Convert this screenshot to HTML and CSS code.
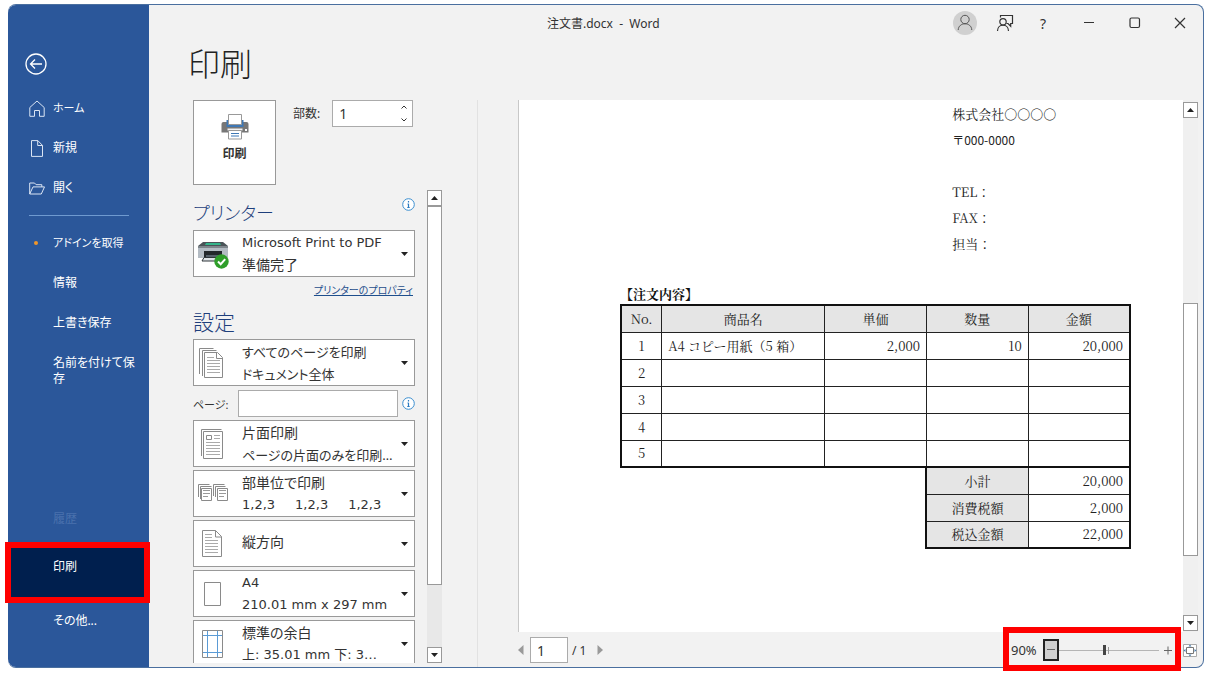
FILE: index.html
```html
<!DOCTYPE html>
<html lang="ja">
<head>
<meta charset="utf-8">
<title>注文書.docx - Word</title>
<link rel="stylesheet" href="styles.css">
</head>
<body>
<svg class="defs" aria-hidden="true">
  <symbol id="info" viewBox="0 0 13 13"><circle cx="6.5" cy="6.5" r="5.8" fill="#fff" stroke="#3c8fd0"/><path d="M6.500 3v1.500M6.500 5.700v4M5.500 6h1M5.300 9.500h2.400" stroke="#2a7ac0" stroke-width="1.200" fill="none"/></symbol>
  <symbol id="down" viewBox="0 0 7 4"><path d="M0 0h7L3.5 4z" fill="#222"/></symbol>
  <symbol id="up" viewBox="0 0 7 4"><path d="M0 4h7L3.5 0z" fill="#222"/></symbol>
</svg>
<div class="window">
  <nav class="sidebar">
    <button class="back" aria-label="戻る">
      <svg width="22" height="22" viewBox="0 0 22 22" fill="none" stroke="#fff" stroke-width="1.300"><circle cx="11" cy="11" r="10"/><path d="M17 11H5.5M10 6.5L5.5 11l4.500 4.500"/></svg>
    </button>
    <button class="nav-item"><svg width="16" height="17" viewBox="0 0 16 17" fill="none" stroke="#dbe5f4"><path d="M.8 7.500L8 1l7.200 6.500v8.800h-4.700v-5.800h-5v5.800H.8z"/></svg><span class="kana">ホーム</span></button>
    <button class="nav-item"><svg width="16" height="17" viewBox="0 0 16 17" fill="none" stroke="#dbe5f4"><path d="M2.500.6h6.300l4.700 4.800v11h-11zM8.700.6v4.900h4.800"/></svg><span>新規</span></button>
    <button class="nav-item"><svg width="16" height="17" viewBox="0 0 16 17" fill="none" stroke="#dbe5f4"><path d="M.7 14V3h4.800l1.600 1.700h5.700v2.200M.7 14L4 6.900h11.500L12.300 14z"/></svg><span>開く</span></button>
    <hr class="nav-line">
    <button class="nav-item"><i class="slot"><i class="dot"></i></i><span class="kana">アドインを取得</span></button>
    <button class="nav-item"><i class="slot"></i><span>情報</span></button>
    <button class="nav-item"><i class="slot"></i><span>上書き保存</span></button>
    <button class="nav-item tall"><i class="slot"></i><span>名前を付けて保存</span></button>
    <button class="nav-item history" disabled><i class="slot"></i><span>履歴</span></button>
    <button class="nav-item current" aria-current="page"><i class="slot"></i><span>印刷</span></button>
    <button class="nav-item"><i class="slot"></i><span>その他...</span></button>
  </nav>

  <main class="main">
    <header class="titlebar">
      <div class="doc-title">注文書.docx&nbsp;&nbsp;-&nbsp;&nbsp;Word</div>
      <div class="window-tools">
        <button class="avatar" aria-label="アカウント"><svg width="24" height="24" viewBox="0 0 24 24"><circle cx="12" cy="12" r="12" fill="#d0d0d0"/><g fill="none" stroke="#555"><circle cx="12" cy="8.500" r="4.200"/><path d="M5.200 19c.3-8.300 13.300-8.300 13.600 0"/></g></svg></button>
        <button aria-label="フィードバック"><svg width="18" height="18" viewBox="0 0 18 18" fill="none" stroke="#333" stroke-width="1.200"><path d="M4.500 3.500V1.500h12v8h-1.800v2.700l-2.700-2.700h-1.500"/><circle cx="7" cy="7.800" r="3.200"/><path d="M1.500 17c0-7.800 11-7.800 11 0"/></svg></button>
        <button class="help" aria-label="ヘルプ">?</button>
        <button aria-label="最小化"><svg width="12" height="12" viewBox="0 0 12 12"><path d="M1 5.500h10" stroke="#333"/></svg></button>
        <button aria-label="最大化"><svg width="12" height="12" viewBox="0 0 12 12"><rect x="1" y="1" width="9.500" height="9.500" rx="1.500" fill="none" stroke="#333" stroke-width="1.200"/></svg></button>
        <button aria-label="閉じる"><svg width="12" height="12" viewBox="0 0 12 12"><path d="M1 1l10 10M11 1L1 11" stroke="#333" stroke-width="1.200"/></svg></button>
      </div>
    </header>
    <h1>印刷</h1>

    <div class="content">
      <section class="settings">
        <div class="print-row">
          <button class="print-button">
            <svg width="28" height="26" viewBox="0 0 28 26"><path d="M2.500 8h23q2 0 2 2v8.500H.5V10q0-2 2-2z" fill="#777"/><path d="M5.500 6h17v7h-17z" fill="#3f78b5"/><path d="M7.500.5h13v10h-13z" fill="#fff" stroke="#999"/><path d="M6.500 14.500h15v2h-15z" fill="#f3f3f3"/><path d="M7.500 16.500h13v8.500h-13z" fill="#fff" stroke="#999"/><path d="M10 19.500h8M10 22h8" stroke="#3f78b5"/><path d="M24 15h2v2h-2z" fill="#fff"/></svg>
            <span>印刷</span>
          </button>
          <label for="copies">部数:</label>
          <div class="spin">
            <input id="copies" type="text" inputmode="numeric" value="1">
            <div class="spin-buttons">
              <button aria-label="増やす"><svg width="6" height="4" viewBox="0 0 6 4"><path d="M.5 3.500L3 1l2.500 2.500" fill="none" stroke="#333"/></svg></button>
              <button aria-label="減らす"><svg width="6" height="4" viewBox="0 0 6 4"><path d="M.5.500L3 3 5.500.500" fill="none" stroke="#333"/></svg></button>
            </div>
          </div>
        </div>

        <div class="scroll-area">
          <div class="options">
            <div class="section-head"><h2 class="printer-title">プリンター</h2><svg class="info"><use href="#info"/></svg></div>
            <button class="picker" aria-haspopup="listbox">
              <svg class="picker-icon" viewBox="0 0 32 32"><path d="M6 4h20l5 4H1z" fill="#4b5358"/><path d="M9 5h14l1 2H8z" fill="#35b58b"/><path d="M1 8h30v12H1z" fill="#b4bcc4"/><path d="M1 8h30v2H1z" fill="#7d858b"/><path d="M7 13h18v7H7z" fill="#22272b"/><path d="M9 17h14v3H9z" fill="#55606a"/><path d="M7 19.500h18l-2 3.500H5z" fill="#dfe4e8" stroke="#30363a"/><circle cx="24.500" cy="23.500" r="7.200" fill="#2f9e2a"/><path d="M21 23.500l2.700 2.700 4.500-5" fill="none" stroke="#fff" stroke-width="2"/></svg>
              <span class="picker-text"><span class="latin">Microsoft Print to PDF</span><span>準備完了</span></span><svg class="caret"><use href="#down"/></svg>
            </button>
            <a class="properties" href="#">プリンターのプロパティ</a>
            <h2 class="settings-title">設定</h2>
            <button class="picker" aria-haspopup="listbox">
              <svg class="picker-icon" viewBox="0 0 32 32" fill="none" stroke="#8a8a8a"><path d="M2.500 27V1.500h14M5.500 29V3.500h14"/><path d="M7.500 5.500h13l5 5v20h-18z" fill="#fff"/><path d="M19.500 5.500v6h6"/><path d="M10 10.500h7M10 13.500h13M10 16.500h13M10 19.500h13M10 22.500h13M10 25.500h13" stroke="#aaa"/></svg>
              <span class="picker-text small"><span>すべてのページを印刷</span><span>ドキュメント全体</span></span><svg class="caret"><use href="#down"/></svg>
            </button>
            <div class="page-row"><label class="kana" for="pages">ページ:</label><input id="pages" type="text"><svg class="info"><use href="#info"/></svg></div>
            <div class="picker-list">
              <button class="picker" aria-haspopup="listbox">
                <svg class="picker-icon" viewBox="0 0 32 32" fill="none" stroke="#8a8a8a"><path d="M4.500 28V1.500h20"/><path d="M6.500 3.500h19v27h-19z" fill="#fff"/><path d="M9.500 7.500h5v4h-5z"/><path d="M17 7.500h6M17 10.500h6M9 14.500h14M9 17.500h14M9 20.500h14M9 23.500h14M9 26.500h14" stroke="#aaa"/></svg>
                <span class="picker-text"><span>片面印刷</span><span class="small">ページの片面のみを印刷…</span></span><svg class="caret"><use href="#down"/></svg>
              </button>
              <button class="picker" aria-haspopup="listbox">
                <svg class="picker-icon" viewBox="0 0 32 32" fill="none" stroke="#8a8a8a"><path d="M1.500 19V6.500h11M3.500 21V8.500h11M16.500 18V6.500h11M18.500 19V8.500h10"/><path d="M4.500 10.500h10v12h-10zM20.500 10.500h10v12h-10z" fill="#fff"/><path d="M6 12.500h7M6 15.500h7M6 18.500h5M22 12.500h7M22 15.500h7M22 18.500h5" stroke="#999"/></svg>
                <span class="picker-text"><span>部単位で印刷</span><span class="orders latin"><span>1,2,3</span><span>1,2,3</span><span>1,2,3</span></span></span><svg class="caret"><use href="#down"/></svg>
              </button>
              <button class="picker single" aria-haspopup="listbox">
                <svg class="picker-icon" viewBox="0 0 32 32" fill="none" stroke="#8a8a8a"><path d="M5.500 2.500h13l6 6v20h-19z" fill="#fff"/><path d="M18.500 2.500v6.500h6"/><path d="M8 6.500h7M8 9.500h7M8 12.500h13M8 15.500h13M8 18.500h13M8 21.500h13M8 24.500h13" stroke="#aaa"/></svg>
                <span class="picker-text"><span>縦方向</span></span><svg class="caret"><use href="#down"/></svg>
              </button>
              <button class="picker" aria-haspopup="listbox">
                <svg class="picker-icon" viewBox="0 0 32 32"><path d="M7.500 4.500h16v23h-16z" fill="#fff" stroke="#8a8a8a"/></svg>
                <span class="picker-text latin"><span>A4</span><span>210.01 mm x 297 mm</span></span><svg class="caret"><use href="#down"/></svg>
              </button>
              <button class="picker" aria-haspopup="listbox">
                <svg class="picker-icon" viewBox="0 0 32 32" fill="none"><path d="M5.500 2.500h20v27h-20z" fill="#fff" stroke="#8a8a8a"/><path d="M10.500 3v26M20.500 3v26M6 7.500h19M6 24.500h19" stroke="#5b9bd5"/></svg>
                <span class="picker-text"><span>標準の余白</span><span class="latin">上: 35.01 mm 下: 3…</span></span><svg class="caret"><use href="#down"/></svg>
              </button>
            </div>
          </div>
          <div class="scrollbar side">
            <button aria-label="上へ"><svg><use href="#up"/></svg></button>
            <div class="track"><div class="thumb"></div></div>
            <button aria-label="下へ"><svg><use href="#down"/></svg></button>
          </div>
        </div>
      </section>

      <section class="preview">
        <div class="stage">
          <article class="sheet">
            <div class="address">
              <p>株式会社〇〇〇〇</p>
              <p class="postal">〒000-0000</p>
              <p>&nbsp;</p>
              <p>TEL：</p>
              <p>FAX：</p>
              <p>担当：</p>
            </div>
            <table class="order">
              <caption>【注文内容】</caption>
              <colgroup><col class="c-no"><col class="c-name"><col class="c-num"><col class="c-num"><col class="c-num"></colgroup>
              <thead><tr><th>No.</th><th>商品名</th><th>単価</th><th>数量</th><th>金額</th></tr></thead>
              <tbody>
                <tr><td>1</td><td class="name">A4 コピー用紙（5 箱）</td><td>2,000</td><td>10</td><td>20,000</td></tr>
                <tr><td>2</td><td></td><td></td><td></td><td></td></tr>
                <tr><td>3</td><td></td><td></td><td></td><td></td></tr>
                <tr><td>4</td><td></td><td></td><td></td><td></td></tr>
                <tr><td>5</td><td></td><td></td><td></td><td></td></tr>
              </tbody>
              <tfoot>
                <tr><td class="blank" colspan="3" rowspan="3"></td><th>小計</th><td>20,000</td></tr>
                <tr><th>消費税額</th><td>2,000</td></tr>
                <tr><th>税込金額</th><td>22,000</td></tr>
              </tfoot>
            </table>
          </article>
          <div class="scrollbar page">
            <button aria-label="上へ"><svg><use href="#up"/></svg></button>
            <div class="track"><div class="thumb"></div></div>
            <button aria-label="下へ"><svg><use href="#down"/></svg></button>
          </div>
        </div>
        <footer class="status">
          <div class="pager">
            <button aria-label="前のページ"><svg width="6" height="10" viewBox="0 0 6 10"><path d="M5.500 0v10L0 5z" fill="#999"/></svg></button>
            <input type="text" value="1" aria-label="ページ番号">
            <span>/ 1</span>
            <button aria-label="次のページ"><svg width="6" height="10" viewBox="0 0 6 10"><path d="M.5 0v10L6 5z" fill="#999"/></svg></button>
          </div>
          <div class="zoom">
            <label for="zoom">90%</label>
            <button class="minus" aria-label="縮小"><svg width="10" height="10" viewBox="0 0 10 10"><path d="M1 4.500h8" stroke="#666"/></svg></button>
            <input id="zoom" type="range" min="0" max="100" value="45">
            <button class="plus" aria-label="拡大"><svg width="10" height="10" viewBox="0 0 10 10"><path d="M1 5.500h8M5 1.500v8" stroke="#666"/></svg></button>
          </div>
          <button class="fit" aria-label="ページに合わせる"><svg width="15" height="15" viewBox="0 0 15 15" fill="none"><path d="M.5 1.500h13v12H.5z" fill="#fff" stroke="#aaa"/><path d="M3.500 4.500h7v6h-7z" stroke="#777"/><path d="M7 1.500l1.500 2h-3zM7 13.500l1.500-2h-3zM.5 7.500l2-1.500v3zM13.500 7.500l-2-1.500v3z" fill="#4a7dab"/></svg></button>
        </footer>
      </section>
    </div>
  </main>
</div>
</body>
</html>
```
FILE: styles.css
```css
* { box-sizing: border-box; }

body {
  margin: 0;
  padding: 4px 7px 9px 8px;
  height: 100vh;
  background: #fff;
  color: #333;
  font-family: "Noto Sans", "Noto Sans CJK JP", sans-serif;
  font-size: 12px;
  font-feature-settings: "palt";
}

button, input {
  font: inherit;
  font-feature-settings: inherit;
  color: inherit;
  margin: 0;
  padding: 0;
  border: 0;
  background: none;
}
button { display: flex; align-items: center; justify-content: center; }
input { min-width: 0; }
h1, h2, p { margin: 0; font-weight: 400; }
svg { display: block; flex: none; }
.defs { position: absolute; width: 0; height: 0; }
.kana { font-size: 11px; }

.window {
  display: flex;
  height: 100%;
  border: 1px solid #4a6f9f;
  border-left: 0;
  border-radius: 8px;
  background: #f2f2f2;
}

/* Sidebar */
.sidebar {
  flex: none;
  display: flex;
  flex-direction: column;
  width: 141px;
  padding: 48px 0 28px;
  border-radius: 8px 0 0 8px;
  background: #2b579a;
  color: #fff;
}
.back { width: 22px; height: 22px; margin: 0 0 13px 17px; }
.nav-item {
  justify-content: flex-start;
  gap: 8px;
  min-height: 40px;
  padding: 0 12px 0 21px;
  text-align: left;
  line-height: 16px;
}
.slot { flex: none; width: 16px; padding-left: 5px; }
.dot { display: block; width: 4px; height: 4px; border-radius: 50%; background: #f0962a; }
.nav-line { width: 100px; height: 1px; margin: 7px 0 7px 21px; border: 0; background: #6f9ad0; }
.tall { align-items: flex-start; padding-top: 12px; }
.history { margin-top: auto; color: #4a71ad; }
.current {
  position: relative;
  min-height: 60px;
  margin-top: 4px;
  padding-bottom: 13px;
  background: #001f4e;
}
.current::after {
  content: "";
  position: absolute;
  inset: -1px -1px 0 -3px;
  border: 6px solid #f00;
  pointer-events: none;
}
.current + .nav-item { min-height: 36px; }

/* Main column */
.main { flex: 1; min-width: 0; display: flex; flex-direction: column; }
.titlebar { display: flex; align-items: center; height: 36px; padding-right: 17px; }
.doc-title { flex: 1; padding-left: 398px; }
.window-tools { display: flex; align-items: center; }
.window-tools button { width: 46px; height: 24px; }
.window-tools .avatar { width: 24px; margin-right: 5px; }
.window-tools .help { width: 30px; margin-right: 8px; font-size: 14px; }
.window-tools button:last-child { width: 12px; margin-left: 16px; }
h1 { height: 48px; margin: 0 0 11px 39px; font-size: 32px; font-weight: 300; line-height: 46px; color: #222; }
.content { flex: 1; min-height: 0; display: flex; }

.settings {
  flex: none;
  display: flex;
  flex-direction: column;
  width: 329px;
  padding: 0 36px 4px 44px;
  border-right: 1px solid #e2e2e2;
}
.print-row { display: flex; align-items: flex-start; }
.print-row label { margin: 4px 12px 0 17px; }
.print-button {
  flex-direction: column;
  gap: 4px;
  width: 83px;
  height: 85px;
  padding-bottom: 9px;
  border: 1px solid #999;
  background: #fff;
  font-weight: 700;
}
.spin { display: flex; width: 81px; height: 27px; border: 1px solid #ababab; background: #fff; }
.spin input { flex: 1; padding-left: 6px; font-size: 14px; }
.spin-buttons { display: flex; flex-direction: column; width: 16px; }
.spin-buttons button { flex: 1; }

.scroll-area { flex: 1; min-height: 0; display: flex; gap: 12px; margin-top: 5px; }
.options { flex: none; width: 222px; overflow: hidden; }
.section-head { display: flex; justify-content: space-between; height: 40px; padding-top: 8px; }
h2 { font-size: 21px; font-weight: 300; line-height: 30px; color: #1e3f7c; }
h2.printer-title { font-size: 18px; }
.info { width: 13px; height: 13px; }
.picker {
  justify-content: flex-start;
  width: 100%;
  height: 47px;
  padding: 0 6px 0 3px;
  border: 1px solid #999;
  background: #fff;
  font-size: 14px;
  line-height: 22px;
  text-align: left;
}
.picker-icon { width: 32px; height: 32px; margin-right: 13px; }
.picker-text { flex: 1; min-width: 0; display: flex; flex-direction: column; white-space: nowrap; }
.picker .latin { font-family: "DejaVu Sans", "Noto Sans CJK JP", sans-serif; font-size: 13px; }
.picker .small { font-size: 13px; }
.single .picker-text { padding-bottom: 4px; }
.caret { width: 7px; height: 4px; }
.orders { display: flex; gap: 20px; }
.properties { display: block; margin: 4px 2px 0 0; font-size: 10px; line-height: 18px; text-align: right; color: #1e4e8c; }
.settings-title { margin: 8px 0 2px; }
.page-row { display: flex; align-items: center; gap: 4px; margin: 4px 0 3px; }
.page-row label { width: 41px; }
.page-row input { flex: 1; height: 27px; border: 1px solid #ababab; background: #fff; }
.picker-list { display: flex; flex-direction: column; gap: 3px; }

/* Scrollbars */
.scrollbar { flex: none; display: flex; flex-direction: column; width: 15px; background: #e8e8e8; }
.scrollbar button { height: 16px; border: 1px solid #999; background: #fff; }
.scrollbar svg { width: 7px; height: 4px; }
.track { flex: 1; display: flex; flex-direction: column; }
.thumb { border: 1px solid #999; background: #fff; }
.side .thumb { height: 86%; }
.page { padding: 2px 0 1px; background: #f0f0f0; }
.page .track { padding-top: 185px; }
.page .thumb { height: 81%; }

/* Preview */
.preview { flex: 1; min-width: 0; display: flex; flex-direction: column; padding: 0 5px 0 40px; }
.stage { flex: 1; min-height: 0; display: flex; }
.sheet {
  flex: 1;
  min-width: 0;
  overflow: hidden;
  padding: 1px 52px 0 101px;
  border-left: 1px solid #c8c8c8;
  background: #fff;
  color: #222;
  font-family: "Noto Serif CJK JP", "Liberation Serif", serif;
  font-size: 13px;
  font-feature-settings: normal;
  line-height: 26px;
}
.address { padding-left: 65%; }
.address p { height: 26px; white-space: nowrap; }
.address .postal { font-family: "Noto Sans CJK JP", sans-serif; font-size: 12px; }

.order { width: 100%; margin-top: 25px; border-collapse: collapse; table-layout: fixed; }
.order caption { height: 22px; line-height: 24px; font-weight: 700; text-align: left; color: #111; }
.c-no { width: 8%; }
.c-name { width: 32%; }
.c-num { width: 20%; }
.order th, .order td { height: 27px; padding: 0 6px; border: 1px solid #222; line-height: 20px; }
.order th { background: #e5e5e5; font-weight: 400; }
.order td { text-align: right; }
.order tbody td:first-child { text-align: center; }
.order tbody .name { text-align: left; white-space: nowrap; }
.order thead, .order tbody { border: 2px solid #111; }
.order thead { border-bottom: 0; }
.order tbody { border-top: 0; }
.order tfoot { border-right: 2px solid #111; }
.order tfoot th { border-left: 2px solid #111; }
.order tfoot tr:last-child > * { border-bottom: 2px solid #111; }
.order tfoot .blank { border: 0; border-top: 2px solid #111; background: #fff; }

/* Status bar */
.status { flex: none; display: flex; align-items: center; height: 35px; padding-top: 1px; }
.pager { display: flex; align-items: center; flex: 1; font-size: 12px; }
.pager button { width: 6px; height: 10px; }
.pager input { width: 38px; height: 26px; margin: 0 4px 0 6px; padding-left: 6px; border: 1px solid #ababab; background: #fff; font-size: 14px; }
.pager span { margin-right: 11px; }
.zoom { position: relative; display: flex; align-items: center; margin-right: 10px; }
.zoom::after {
  content: "";
  position: absolute;
  inset: -12px -8px -10px;
  border: 6px solid #f00;
  pointer-events: none;
}
.zoom label { width: 32px; font-size: 13px; }
.minus { width: 16px; height: 22px; border: 2px solid #222; background: #d0d0d0; }
.plus { width: 10px; height: 10px; margin-left: 4px; }
#zoom {
  appearance: none;
  width: 100px;
  height: 16px;
  background:
    linear-gradient(#999, #999) 49px 50% / 1px 7px no-repeat,
    linear-gradient(#b5b5b5, #b5b5b5) 0 50% / 100% 1px no-repeat;
}
#zoom::-webkit-slider-thumb { appearance: none; width: 3px; height: 10px; background: #444; }
.fit { width: 15px; height: 15px; }
```
